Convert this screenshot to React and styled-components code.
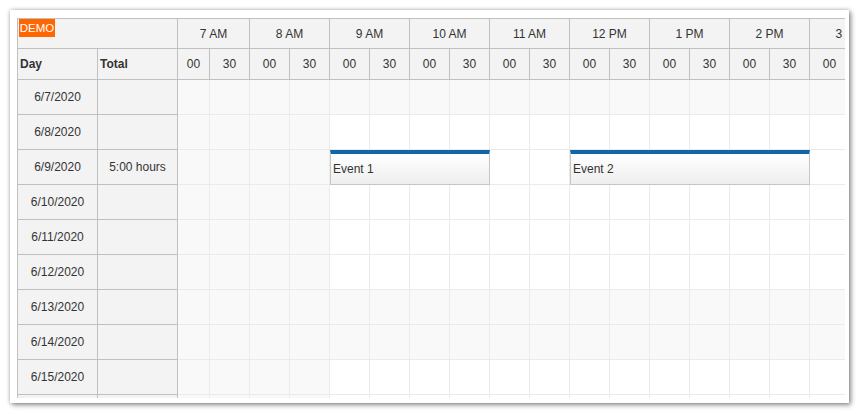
import React from 'react';
import styled, { createGlobalStyle } from 'styled-components';

const GlobalStyle = createGlobalStyle`
  body {
    margin: 0;
    background: #ffffff;
    font-family: "Liberation Sans", Arial, sans-serif;
    font-size: 12px;
    color: #333333;
  }
`;

const HOURS = ['7 AM', '8 AM', '9 AM', '10 AM', '11 AM', '12 PM', '1 PM', '2 PM', '3 PM'];
const SLOT = 40;
const FIRST_SLOT = 32; // grid is scrolled 8px to the right

const DAYS = [
  { date: '6/7/2020', weekend: true },
  { date: '6/8/2020' },
  { date: '6/9/2020', total: '5:00 hours' },
  { date: '6/10/2020' },
  { date: '6/11/2020' },
  { date: '6/12/2020' },
  { date: '6/13/2020', weekend: true },
  { date: '6/14/2020', weekend: true },
  { date: '6/15/2020' },
  { date: '6/16/2020' },
];

const EVENTS = [
  { id: 1, row: 2, start: 9, end: 11, text: 'Event 1' },
  { id: 2, row: 2, start: 12, end: 15, text: 'Event 2' },
];

const slotX = (t) => FIRST_SLOT + (t - 7.5) * 80;

const Frame = styled.div`
  margin: 10px;
  width: 839px;
  height: 393px;
  box-sizing: border-box;
  padding: 8px 4px 5px 7px;
  background: #ffffff;
  box-shadow: 0 0 4px rgba(0, 0, 0, 0.25), 2px 2px 5px rgba(0, 0, 0, 0.4);
`;

const Scheduler = styled.div`
  display: flex;
  width: 828px;
  height: 380px;
  overflow: hidden;
  box-sizing: border-box;
  border-left: 1px solid #c0c0c0;
  border-top: 1px solid #c0c0c0;
`;

const LeftPane = styled.div`
  flex: 0 0 160px;
  display: flex;
  flex-direction: column;
`;

const TimePane = styled.div`
  flex: 1;
  overflow: hidden;
  display: flex;
  flex-direction: column;
`;

const HeaderRow = styled.div`
  display: flex;
  flex: 0 0 ${(p) => p.$h}px;
  height: ${(p) => p.$h}px;
`;

const HeaderCell = styled.div`
  position: relative;
  flex: 0 0 ${(p) => p.$w}px;
  width: ${(p) => p.$w}px;
  box-sizing: border-box;
  background: #f3f3f3;
  border-right: 1px solid #c0c0c0;
  border-bottom: 1px solid #c0c0c0;
  display: flex;
  align-items: center;
  justify-content: ${(p) => (p.$left ? 'flex-start' : 'center')};
  padding-left: ${(p) => (p.$left ? '2px' : '0')};
  font-weight: ${(p) => (p.$bold ? 'bold' : 'normal')};
  white-space: nowrap;
`;

const Demo = styled.div`
  position: absolute;
  left: 1px;
  top: 0;
  width: 36px;
  height: 18px;
  line-height: 18px;
  text-align: center;
  background: #ff6600;
  color: #ffffff;
  font-size: 11.5px;
`;

const Row = styled.div`
  position: relative;
  display: flex;
  flex: 0 0 35px;
  height: 35px;
`;

const RowHeader = styled.div`
  flex: 0 0 ${(p) => p.$w}px;
  box-sizing: border-box;
  background: #f3f3f3;
  border-right: 1px solid #c0c0c0;
  border-bottom: 1px solid #c0c0c0;
  display: flex;
  align-items: center;
  justify-content: center;
  white-space: nowrap;
`;

const Cell = styled.div`
  flex: 0 0 ${(p) => p.$w}px;
  box-sizing: border-box;
  background: ${(p) => (p.$business ? '#ffffff' : '#f9f9f9')};
  border-right: 1px solid #ebebeb;
  border-bottom: 1px solid #ebebeb;
`;

const Event = styled.div`
  position: absolute;
  top: 0;
  height: 35px;
  box-sizing: border-box;
  border: 1px solid #c6c6c6;
  border-top: 4px solid #1066a8;
  background: linear-gradient(to bottom, #ffffff 0%, #eeeeee 100%);
  display: flex;
  align-items: center;
  padding-left: 2px;
  white-space: nowrap;
  overflow: hidden;
`;

const slots = HOURS.flatMap((h, i) => [
  { hour: 7 + i, min: '00' },
  { hour: 7 + i, min: '30' },
]);

export default function App() {
  return (
    <>
      <GlobalStyle />
      <Frame>
        <Scheduler>
          <LeftPane>
            <HeaderRow $h={30}>
              <HeaderCell $w={160}>
                <Demo>DEMO</Demo>
              </HeaderCell>
            </HeaderRow>
            <HeaderRow $h={31}>
              <HeaderCell $w={80} $left $bold>Day</HeaderCell>
              <HeaderCell $w={80} $left $bold>Total</HeaderCell>
            </HeaderRow>
            {DAYS.map((d) => (
              <Row key={d.date}>
                <RowHeader $w={80}>{d.date}</RowHeader>
                <RowHeader $w={80}>{d.total || ''}</RowHeader>
              </Row>
            ))}
          </LeftPane>
          <TimePane>
            <HeaderRow $h={30}>
              {HOURS.map((h, i) => (
                <HeaderCell key={h} $w={i === 0 ? 80 - (SLOT - FIRST_SLOT) : 80}>
                  {h}
                </HeaderCell>
              ))}
            </HeaderRow>
            <HeaderRow $h={31}>
              {slots.map((s, i) => (
                <HeaderCell key={i} $w={i === 0 ? FIRST_SLOT : SLOT}>
                  {s.min}
                </HeaderCell>
              ))}
            </HeaderRow>
            {DAYS.map((d, r) => (
              <Row key={d.date}>
                {slots.map((s, i) => (
                  <Cell
                    key={i}
                    $w={i === 0 ? FIRST_SLOT : SLOT}
                    $business={!d.weekend && s.hour >= 9 && s.hour < 18}
                  />
                ))}
                {EVENTS.filter((e) => e.row === r).map((e) => (
                  <Event
                    key={e.id}
                    style={{ left: slotX(e.start), width: (e.end - e.start) * 80 }}
                  >
                    {e.text}
                  </Event>
                ))}
              </Row>
            ))}
          </TimePane>
        </Scheduler>
      </Frame>
    </>
  );
}
